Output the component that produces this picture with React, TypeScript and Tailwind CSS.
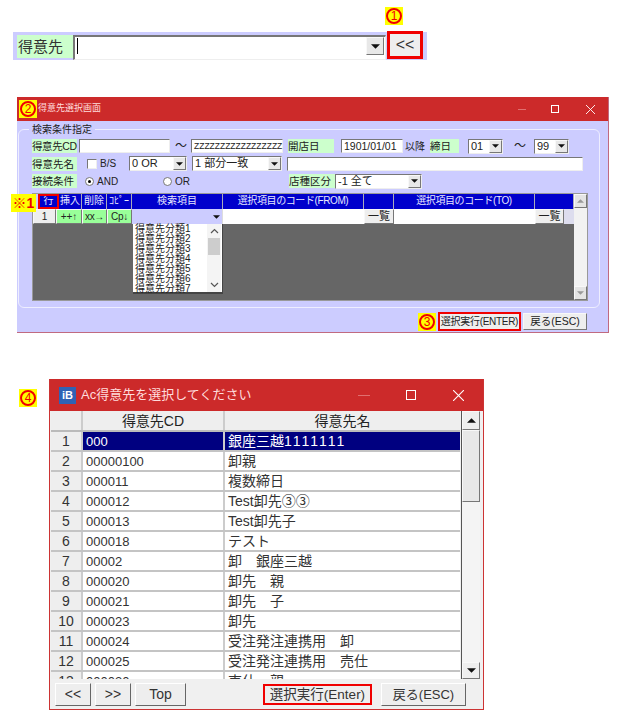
import React from "react";

const bevel = "border border-t-[#f8f8f8] border-l-[#f8f8f8] border-r-[#777] border-b-[#777]";
const sunken = "border border-t-[#777] border-l-[#777] border-r-[#eee] border-b-[#eee]";

function Mark({ t, cls = "" }: { t: string; cls?: string }) {
  return (
    <div className={`w-[18px] h-[18px] bg-[#ffff00] flex items-center justify-center shrink-0 ${cls}`}>
      <div className="w-[16px] h-[16px] rounded-full border-2 border-[#f00000] text-[#f00000] text-[12px] leading-[12px] text-center">{t}</div>
    </div>
  );
}

function Arrow({ small = false }: { small?: boolean }) {
  return (
    <svg width={small ? 7 : 9} height={small ? 4 : 5} viewBox="0 0 8 4"><path d="M0 0h8L4 4z" fill="#111" /></svg>
  );
}

function Sel({ w, text, cls = "" }: { w: string; text: string; cls?: string }) {
  return (
    <div className={`${w} h-[15px] bg-white ${sunken} flex items-center justify-between text-[11px] leading-none pl-[2px] shrink-0 ${cls}`}>
      <span className="whitespace-nowrap">{text}</span>
      <span className={`w-[13px] h-[13px] bg-[#e8e8e8] ${bevel} flex items-center justify-center`}><Arrow small /></span>
    </div>
  );
}

function Lab({ w, text, cls = "" }: { w: string; text: string; cls?: string }) {
  return <div className={`${w} h-[14px] bg-[#ccffcc] text-[10.5px] leading-[14px] whitespace-nowrap shrink-0 ${cls}`}>{text}</div>;
}

function Inp({ w, text = "", cls = "" }: { w: string; text?: string; cls?: string }) {
  return <div className={`${w} h-[14px] bg-white ${sunken} leading-[12px] pl-[2px] whitespace-nowrap shrink-0 ${cls}`}>{text}</div>;
}

const head = "h-[15px] bg-[#0000cc] text-[#e8e8ff] text-[10px] leading-[14px] text-center border-r border-[#aab] whitespace-nowrap shrink-0";

function SearchGrid() {
  const list = ["得意先分類1", "得意先分類2", "得意先分類3", "得意先分類4", "得意先分類5", "得意先分類6", "得意先分類7"];
  return (
    <div className="relative mt-[4px] w-[556px] h-[108px] border border-[#999] flex">
      <div className="w-[541px] h-full bg-[#666666] flex flex-col">
        <div className="flex">
          <div className={`${head} w-[6px] !bg-[#ccccff]`} />
          <div className={`${head} w-[20px]`}>行</div>
          <div className={`${head} w-[23px]`}>挿入</div>
          <div className={`${head} w-[25px]`}>削除</div>
          <div className={`${head} w-[25px]`}>ｺﾋﾟｰ</div>
          <div className={`${head} w-[91px]`}>検索項目</div>
          <div className={`${head} w-[141px] tracking-[-0.4px]`}>選択項目のコード(FROM)</div>
          <div className={`${head} w-[30px]`} />
          <div className={`${head} w-[141px] tracking-[-0.4px]`}>選択項目のコード(TO)</div>
          <div className={`${head} w-[39px]`} />
        </div>
        <div className="flex h-[15px] text-[10px] leading-[13px]">
          <div className={`w-[23px] bg-[#eeeeee] text-center ${bevel}`}>1</div>
          <div className={`w-[26px] bg-[#99ff99] text-center ${bevel}`}>++↑</div>
          <div className={`w-[25px] bg-[#99ff99] text-center ${bevel} whitespace-nowrap tracking-[-0.3px]`}>xx→</div>
          <div className={`w-[25px] bg-[#99ff99] text-center ${bevel} whitespace-nowrap tracking-[-0.3px]`}>Cp↓</div>
          <div className="w-[91px] bg-[#ccccff] flex items-center justify-end pr-[2px] border-r border-[#ddd]"><Arrow small /></div>
          <div className="w-[141px] bg-white" />
          <div className={`w-[30px] bg-[#eeeeee] text-center text-[11px] ${bevel}`}>一覧</div>
          <div className="w-[141px] bg-white" />
          <div className={`w-[29px] bg-[#eeeeee] text-center text-[11px] ${bevel}`}>一覧</div>
          <div className="w-[10px] bg-[#ddddee]" />
        </div>
        <div className="ml-[100px] w-[90px] h-[70px] bg-white border-b-2 border-r border-[#444] flex">
          <div className="w-[74px] text-[10px] leading-[10px] pl-[2px] text-[#222]">
            {list.map((s) => <div key={s} className="h-[10px] whitespace-nowrap">{s}</div>)}
          </div>
          <div className="w-[14px] bg-[#f4f4f4] flex flex-col items-center">
            <svg width="9" height="14" viewBox="0 0 9 14"><path d="M1 9l3.5-3.5L8 9" fill="none" stroke="#555" strokeWidth="1.2" /></svg>
            <div className="w-[12px] h-[17px] bg-[#cdcdcd]" />
            <div className="flex-1" />
            <svg width="9" height="14" viewBox="0 0 9 14"><path d="M1 5l3.5 3.5L8 5" fill="none" stroke="#555" strokeWidth="1.2" /></svg>
          </div>
        </div>
      </div>
      <div className="w-[14px] h-full bg-[#f2f2f2] flex flex-col justify-between">
        <div className={`h-[14px] bg-[#e4e4e4] ${bevel} flex items-center justify-center`}><svg width="7" height="4" viewBox="0 0 8 4"><path d="M0 4h8L4 0z" fill="#999" /></svg></div>
        <div className={`h-[14px] bg-[#e4e4e4] ${bevel} flex items-center justify-center`}><svg width="7" height="4" viewBox="0 0 8 4"><path d="M0 0h8L4 4z" fill="#999" /></svg></div>
      </div>
      <div className="absolute left-[5px] top-[0px] w-[21px] h-[15px] border-2 border-[#f00000]" />
    </div>
  );
}

function WinBtns({ size }: { size: "s" | "l" }) {
  const big = size === "l";
  return (
    <div className="flex items-center">
      <div className={`${big ? "w-[12px]" : "w-[8px]"} h-px bg-[#e07070]`} />
      <div className={`${big ? "ml-[36px] w-[10px] h-[10px]" : "ml-[25px] w-[8px] h-[8px]"} border border-white`} />
      <svg className={big ? "ml-[37px]" : "ml-[27px]"} width={big ? 11 : 9} height={big ? 11 : 9} viewBox="0 0 10 10"><path d="M0 0l10 10M10 0L0 10" stroke="#fff" strokeWidth="1" /></svg>
    </div>
  );
}

function SearchWindow() {
  return (
    <div className="relative mt-[37px] ml-[17px] w-[592px] h-[236px] bg-[#ccccff] border-r border-b border-[#c06a80] flex flex-col">
      <div className="h-[24px] bg-[#cc2a2a] flex items-center justify-between pl-[2px] pr-[13px] shrink-0">
        <div className="flex items-center">
          <Mark t="2" />
          <span className="ml-[1px] text-[9px] text-[#ffdcdc]">得意先選択画面</span>
        </div>
        <WinBtns size="s" />
      </div>
      <div className="relative ml-[1px] mt-[8px] w-[582px] h-[179px] border border-[#eef] rounded-[6px] pt-[8px] pl-[13px] shrink-0">
        <div className="absolute left-[10px] top-[-6px] px-[3px] bg-[#ccccff] text-[10px] leading-[12px] text-[#222]">検索条件指定</div>
        <div className="flex items-center h-[16px] text-[#222]">
          <Lab w="w-[45px]" text="得意先CD" cls="tracking-[-0.4px]" />
          <Inp w="w-[91px]" cls="ml-[2px]" />
          <span className="ml-[5px] w-[16px] text-[12px]">～</span>
          <Inp w="w-[92px]" text="ZZZZZZZZZZZZZZZZZ" cls="text-[8.5px]" />
          <Lab w="w-[46px]" text="開店日" cls="ml-[5px]" />
          <Inp w="w-[62px]" text="1901/01/01" cls="ml-[7px] text-[10.5px]" />
          <span className="ml-[2px] text-[10px] w-[22px]">以降</span>
          <Lab w="w-[29px]" text="締日" cls="ml-[3px]" />
          <Sel w="w-[35px]" text="01" cls="ml-[9px]" />
          <span className="ml-[11px] w-[20px] text-[12px]">～</span>
          <Sel w="w-[35px]" text="99" />
        </div>
        <div className="flex items-center h-[15px] mt-[2px] text-[#222]">
          <Lab w="w-[45px]" text="得意先名" />
          <div className={`ml-[10px] w-[10px] h-[10px] bg-white ${sunken}`} />
          <span className="ml-[3px] w-[29px] text-[10px]">B/S</span>
          <Sel w="w-[58px]" text="0 OR" />
          <Sel w="w-[90px]" text="1 部分一致" cls="ml-[5px]" />
          <Inp w="w-[296px]" cls="ml-[5px]" />
        </div>
        <div className="flex items-center h-[16px] mt-[2px] text-[#222]">
          <Lab w="w-[45px]" text="接続条件" />
          <div className="ml-[8px] w-[9px] h-[9px] rounded-full bg-white border border-[#777] flex items-center justify-center"><div className="w-[3px] h-[3px] rounded-full bg-black" /></div>
          <span className="ml-[3px] w-[66px] text-[10px]">AND</span>
          <div className="w-[9px] h-[9px] rounded-full bg-white border border-[#777]" />
          <span className="ml-[3px] w-[114px] text-[10px]">OR</span>
          <Lab w="w-[46px]" text="店種区分" />
          <Sel w="w-[87px]" text="-1 全て" />
        </div>
        <SearchGrid />
      </div>
      <div className="flex items-center justify-end mt-[4px] mr-[21px] text-[#222]">
        <Mark t="3" cls="mr-[2px]" />
        <div className="w-[83px] h-[19px] border-2 border-[#f00000] bg-[#eeeeee] text-[10px] leading-[15px] text-center whitespace-nowrap tracking-[-0.3px]">選択実行(ENTER)</div>
        <div className={`ml-[2px] w-[64px] h-[17px] bg-[#eeeeee] ${bevel} text-[10.5px] leading-[15px] text-center whitespace-nowrap`}>戻る(ESC)</div>
      </div>
      <div className="absolute left-[-6px] top-[97px] w-[25px] h-[18px] bg-[#ffff00] text-[#f00000] text-[14px] leading-[18px] text-center font-bold whitespace-nowrap">※1</div>
    </div>
  );
}

const rows: [string, string][] = [
  ["000", ""],
  ["00000100", "卸親"],
  ["000011", "複数締日"],
  ["000012", "Test卸先③③"],
  ["000013", "Test卸先子"],
  ["000018", "テスト"],
  ["00002", "卸　銀座三越"],
  ["000020", "卸先　親"],
  ["000021", "卸先　子"],
  ["000023", "卸先"],
  ["000024", "受注発注連携用　卸"],
  ["000025", "受注発注連携用　売仕"],
  ["000030", "売仕　親"],
];

function BottomBtn({ w, text }: { w: string; text: string }) {
  return <div className={`${w} h-[23px] bg-[#eeeeee] border border-t-white border-l-white border-r-[#666] border-b-[#666] text-[14px] leading-[21px] text-center text-[#333] whitespace-nowrap shrink-0`}>{text}</div>;
}

function PickWindow() {
  return (
    <div className="w-[435px] h-[331px] bg-[#f0f0f0] border-l border-r border-b border-[#cc3333] flex flex-col">
      <div className="h-[32px] bg-[#cc2a2a] flex items-center justify-between pl-[9px] pr-[19px] shrink-0">
        <div className="flex items-center">
          <div className="w-[17px] h-[17px] bg-[#2f62b4] flex items-center justify-center text-white text-[11px] font-bold leading-none">iB</div>
          <span className="ml-[5px] text-[13px] text-[#ffdcdc] whitespace-nowrap">Ac得意先を選択してください</span>
        </div>
        <WinBtns size="l" />
      </div>
      <div className="flex h-[268px] overflow-hidden pl-[1px] shrink-0">
        <div className="w-[409px] shrink-0 flex flex-col">
          <div className="flex h-[21px] shrink-0 bg-[#eeeeee] text-[14px] leading-[20px] text-center text-[#222] border-b-2 border-[#bbb]">
            <div className="w-[32px] border-r-2 border-[#ccc]" />
            <div className="w-[142px] border-r-2 border-[#ccc]">得意先CD</div>
            <div className="flex-1">得意先名</div>
          </div>
          {rows.map(([cd, name], i) => (
            <div key={cd} className="flex h-[20px] shrink-0 text-[13px] leading-[19px] text-[#333] border-b-2 border-[#c4c4c4]">
              <div className="w-[32px] bg-[#eeeeee] text-center border-r-2 border-[#ccc] text-[14px]">{i + 1}</div>
              <div className={`w-[142px] pl-[3px] border-r-2 border-[#ccc] ${i === 0 ? "bg-[#000080] text-white" : "bg-white"}`}>{cd}</div>
              <div className={`flex-1 pl-[3px] text-[14px] whitespace-nowrap ${i === 0 ? "bg-[#000080] text-white" : "bg-white"}`}>
                {i === 0 ? <>銀座三越<span className="tracking-[2px]">1111111</span></> : name}
              </div>
            </div>
          ))}
        </div>
        <div className="w-[19px] ml-[1px] bg-[#f4f4f4] border-l border-[#555] flex flex-col shrink-0">
          <div className={`h-[19px] bg-[#eeeeee] ${bevel} flex items-center justify-center`}><svg width="9" height="5" viewBox="0 0 8 4"><path d="M0 4h8L4 0z" fill="#111" /></svg></div>
          <div className={`h-[72px] bg-[#e8e8e8] ${bevel}`} />
          <div className="flex-1" />
          <div className={`h-[17px] bg-[#eeeeee] ${bevel} flex items-center justify-center`}><Arrow /></div>
        </div>
      </div>
      <div className="flex items-center h-[30px] pl-[5px]">
        <BottomBtn w="w-[36px]" text="<<" />
        <BottomBtn w="w-[36px] ml-[4px]" text=">>" />
        <BottomBtn w="w-[51px] ml-[4px]" text="Top" />
        <div className="ml-[77px] w-[109px] h-[21px] border-2 border-[#f00000] bg-[#eeeeee] text-[13.5px] leading-[17px] text-center text-[#333] whitespace-nowrap">選択実行(Enter)</div>
        <BottomBtn w="w-[85px] ml-[9px] !text-[13px]" text="戻る(ESC)" />
      </div>
    </div>
  );
}

export default function App() {
  return (
    <div className="w-[624px] h-[721px] bg-white overflow-hidden pt-[7px] font-['Liberation_Sans','Noto_Sans_CJK_JP',sans-serif] text-[#222]">
      <Mark t="1" cls="ml-[385px]" />
      <div className="ml-[13px] mt-[7px] w-[414px] h-[28px] bg-[#ccccff] flex items-start pt-[3px] pl-[4px]">
        <div className="w-[56px] h-[23px] bg-[#ccffcc] text-[15px] leading-[23px] pl-[1px] text-[#333]">得意先</div>
        <div className={`w-[313px] h-[25px] bg-white ${sunken} border-t-2 border-l-2 flex items-start justify-between pl-[2px] pr-[1px]`}>
          <div className="w-px h-[16px] bg-black mt-[1px]" />
          <div className={`w-[18px] h-[18px] bg-[#e8e8e8] ${bevel} flex items-center justify-center`}><Arrow /></div>
        </div>
        <div className="-mt-[4px] ml-[1px] w-[36px] h-[28px] border-[3px] border-[#f00000] bg-[#eeeeee] text-[16px] leading-[21px] text-center text-[#333]">&lt;&lt;</div>
      </div>
      <SearchWindow />
      <div className="flex mt-[46px] ml-[19px]">
        <Mark t="4" cls="mt-[10px]" />
        <div className="ml-[12px]"><PickWindow /></div>
      </div>
    </div>
  );
}
